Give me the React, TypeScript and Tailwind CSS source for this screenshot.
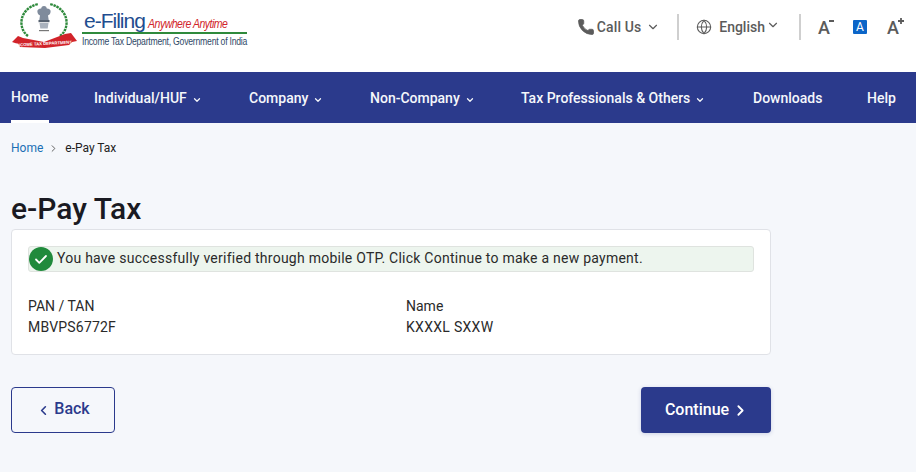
import React from "react";
import { ChevronDown, ChevronRight, ChevronLeft, Globe, Phone } from "lucide-react";

function Logo() {
  return (
    <div className="flex items-start">
      <svg width="68" height="50" viewBox="0 0 68 50" className="mt-[1px] ml-[11px] shrink-0">
        <path d="M17 35C7 28 7 8 27 3" fill="none" stroke="#2f8a3c" strokeWidth="2.4" strokeDasharray="2.500 0.8" />
        <path d="M49 35C59 28 59 8 39 3" fill="none" stroke="#2f8a3c" strokeWidth="2.4" strokeDasharray="2.500 0.8" />
        <path d="M33 5c1.800 0 2.800 1.300 2.800 2.600 2.600 0 4.200 1.300 3.800 3.400-.4 2.200-1.700 3-2.600 3.500l.7 4.500h-9.400l.7-4.500c-.9-.5-2.200-1.300-2.600-3.500-.4-2.100 1.200-3.400 3.800-3.400 0-1.300 1-2.600 2.800-2.600z" fill="#7f8b9c" />
        <rect x="27.500" y="19" width="11" height="2.200" fill="#56616f" />
        <path d="M28.500 22h9l-.8 5.500h-7.400z" fill="#aab2bd" />
        <rect x="28" y="29" width="10" height="1.200" fill="#777" />
        <path d="M1 41 L7 35 L12 37 L33 41 L54 33 L60 32 L66 40 L61 41 L58 44 L34 47 L9 46 L7 43 Z" fill="#d2232a" />
        <text x="33" y="44" textAnchor="middle" fontSize="4.200" fontWeight="700" fill="#fff" transform="rotate(-3 33 44)" className="font-['Liberation_Sans',sans-serif]">INCOME TAX DEPARTMENT</text>
      </svg>
      <div className="ml-[3px] mt-[9px] flex w-[165px] flex-col font-['Liberation_Sans',sans-serif]">
        <div className="flex h-[22px] items-end pl-[2px] leading-none whitespace-nowrap">
          <span className="text-[21px] tracking-[-1px] text-[#1f4d8f]">e-Filing</span>
          <span className="mb-[1px] ml-[3px] origin-left scale-x-[0.875] text-[12px] tracking-[-0.55px] text-[#d1232a] italic">Anywhere Anytime</span>
        </div>
        <div className="mt-[1px] h-[2px] bg-[#2f8a3c]" />
        <div className="mt-[1px] origin-left scale-x-[0.787] text-[11px] leading-[13px] tracking-[-0.3px] whitespace-nowrap text-[#2f4a68]">
          Income Tax Department, Government of India
        </div>
      </div>
    </div>
  );
}

function NavItem({ label, chevron = true, width }: { label: string; chevron?: boolean; width: string }) {
  return (
    <div className={`flex items-center pt-[2px] text-[14px] font-medium text-[#f5f7fb] ${width}`}>
      <span>{label}</span>
      {chevron && <ChevronDown className="ml-[5px] mt-[2px] h-[10px] w-[10px]" strokeWidth={3} />}
    </div>
  );
}

export default function App() {
  return (
    <div className="h-[472px] w-[916px] overflow-hidden bg-[#f5f7fb] font-['Roboto',sans-serif] text-[#1a1a1a]">
      <header className="flex h-[72px] items-start justify-between bg-white">
        <Logo />
        <div className="flex h-[72px] items-center pb-[18px] text-[#5b5b5b]">
          <Phone className="h-[18px] w-[18px] fill-[#5b5b5b]" strokeWidth={1} />
          <span className="ml-[2px] text-[14px] font-medium tracking-[0.1px]">Call Us</span>
          <ChevronDown className="ml-[5px] h-[14px] w-[14px]" />
          <div className="ml-[17px] h-[26px] w-[2px] bg-[#cfcfcf]" />
          <Globe className="ml-[17px] h-[16px] w-[16px]" strokeWidth={1.6} />
          <span className="ml-[7px] text-[14px] font-medium">English</span>
          <ChevronDown className="mb-[4px] ml-[1px] h-[14px] w-[14px]" />
          <div className="ml-[19px] h-[26px] w-[2px] bg-[#cfcfcf]" />
          <div className="relative ml-[17px] w-[18px] pt-[1px] text-[18px] font-medium leading-none">
            A<span className="absolute top-[2px] left-[11px] h-[2px] w-[5px] bg-[#5b5b5b]" />
          </div>
          <div className="ml-[17px] flex h-[14px] w-[14px] items-center justify-center rounded-[1px] bg-[#0b65c8] text-[12px] leading-none text-white">
            A
          </div>
          <div className="relative ml-[20px] mr-[13px] w-[16px] pt-[1px] text-[18px] font-medium leading-none">
            A
            <svg width="8" height="8" viewBox="0 0 8 8" className="absolute top-[-1px] left-[10px]">
              <path d="M4 1v6M1 4h6" stroke="#5b5b5b" strokeWidth="1.800" />
            </svg>
          </div>
        </div>
      </header>

      <nav className="flex h-[51px] items-stretch bg-[#2b3a8c] pl-[11px]">
        <div className="flex w-[83px] flex-col justify-between text-[14px] font-medium text-[#f5f7fb]">
          <span className="pt-[15px]">Home</span>
          <span className="h-[3px] w-[38px] bg-white" />
        </div>
        <div className="flex flex-1 items-center">
          <NavItem label="Individual/HUF" width="w-[155px]" />
          <NavItem label="Company" width="w-[121px]" />
          <NavItem label="Non-Company" width="w-[151px]" />
          <NavItem label="Tax Professionals & Others" width="w-[232px]" />
          <NavItem label="Downloads" chevron={false} width="w-[114px]" />
          <NavItem label="Help" chevron={false} width="w-auto" />
        </div>
      </nav>

      <main className="px-[11px]">
        <div className="flex items-center pt-[18px] text-[12px] leading-[14px]">
          <span className="text-[#1a6fb5]">Home</span>
          <ChevronRight className="ml-[5px] h-[11px] w-[11px] text-[#555]" />
          <span className="ml-[6px] text-[#222]">e-Pay Tax</span>
        </div>

        <h1 className="mt-[37px] text-[30px] leading-[34px] font-medium text-[#1a1a22]">e-Pay Tax</h1>

        <section className="mt-[3px] h-[126px] w-[760px] rounded-[4px] border border-[#e0e2e7] bg-white px-[16px] pt-[16px] text-[14px] text-[#2a2a2a]">
          <div className="flex h-[26px] items-center rounded-[3px] border border-[#dfe3df] bg-[#edf5ee]">
            <span className="flex h-[24px] w-[24px] shrink-0 items-center justify-center rounded-full bg-[#208a3c]">
              <svg width="16" height="16" viewBox="0 0 16 16" fill="none">
                <path d="M3 8.500l3.300 3.300L13 5" stroke="#fff" strokeWidth="1.800" strokeLinecap="round" strokeLinejoin="round" />
              </svg>
            </span>
            <span className="ml-[4px] -translate-y-px tracking-[0.25px] whitespace-nowrap">
              You have successfully verified through mobile OTP. Click Continue to make a new payment.
            </span>
          </div>
          <div className="mt-[24px] grid grid-cols-[378px_1fr] leading-[21px]">
            <div>
              <div>PAN / TAN</div>
              <div className="tracking-[0.2px]">MBVPS6772F</div>
            </div>
            <div>
              <div>Name</div>
              <div className="tracking-[0.3px]">KXXXL SXXW</div>
            </div>
          </div>
        </section>

        <div className="mt-[32px] flex w-[760px] items-center justify-between">
          <button className="flex h-[46px] w-[104px] items-center justify-center rounded-[4px] border border-[#2b3a8c] pb-[3px] text-[16px] font-medium text-[#2b3a8c]">
            <ChevronLeft className="mr-[3px] mt-[3px] h-[15px] w-[15px]" strokeWidth={2.6} />
            Back
          </button>
          <button className="flex h-[46px] w-[130px] items-center justify-center rounded-[4px] bg-[#2b3a8c] pl-[2px] text-[16px] font-medium text-white shadow-[0_1px_4px_rgba(43,58,140,0.2)]">
            Continue
            <ChevronRight className="ml-[3px] h-[17px] w-[17px]" strokeWidth={2.6} />
          </button>
        </div>
      </main>
    </div>
  );
}
